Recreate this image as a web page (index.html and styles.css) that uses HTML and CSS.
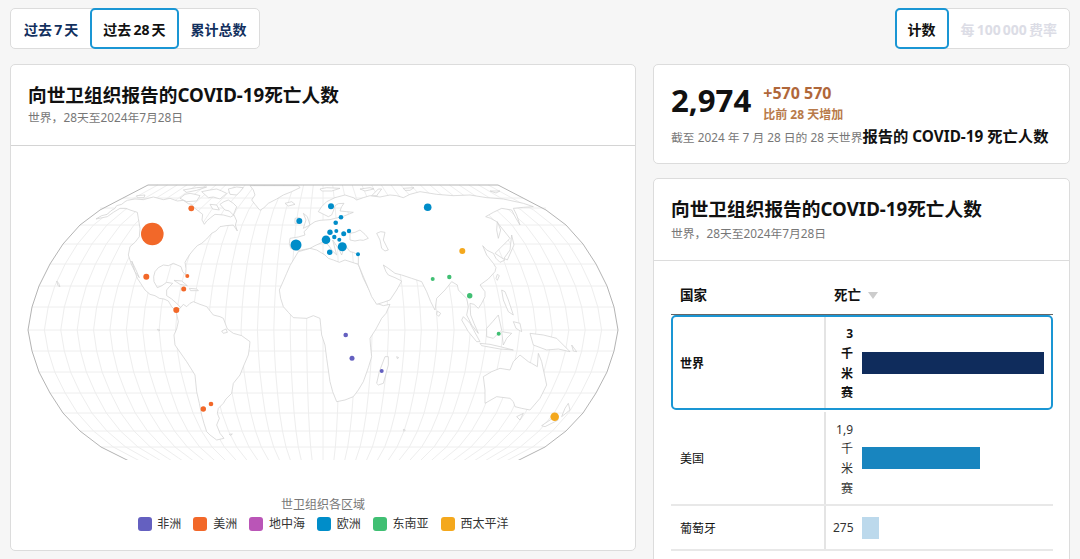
FILE: index.html
```html
<!DOCTYPE html>
<html lang="en">
<head>
    <meta charset="UTF-8">
    <meta name="viewport" content="width=device-width, initial-scale=1.0">
    <title>COVID-19 Deaths</title>
    <link rel="stylesheet" href="styles.css">
</head>
<body>

    <!-- Top toggles -->
    <div class="toolbar">
        <div class="toggle">
            <div class="toggle-item">过去 7 天</div>
            <div class="toggle-item active">过去 28 天</div>
            <div class="toggle-item">累计总数</div>
        </div>
        <div class="toggle">
            <div class="toggle-item active">计数</div>
            <div class="toggle-item disabled">每 100 000 费率</div>
        </div>
    </div>

    <div class="columns">
        <!-- Map card -->
        <div class="card map-card">
            <div class="card-head">
                <div class="card-title">向世卫组织报告的COVID-19死亡人数</div>
                <div class="card-sub">世界，28天至2024年7月28日</div>
            </div>

            <svg class="map" viewBox="11 146 624 314" aria-label="World map">
                <defs>
                    <path id="meridian" d="M175 185L200 198L223 210L243 225L260 244L273 264L284 286L291 307L295 330L291 351L284 372L273 393L260 413L243 431L222 447L200 458L190 463"/>
                </defs>

                <!-- parallels -->
                <g class="grid">
                    <path d="M123 198H523M100 208H546M80 225H566M63 244H583M50 264H596M39 286H607M32 307H614M28 330H618M32 351H614M39 372H607M50 393H596M63 413H583M80 431H566M101 447H545"/>
                </g>

                <!-- meridians, the same curve scaled around the centre line -->
                <g class="grid" transform="translate(323 0)">
                    <path d="M0 185V460"/>
                    <use href="#meridian" transform="scale(.0556 1)"/><use href="#meridian" transform="scale(-.0556 1)"/>
                    <use href="#meridian" transform="scale(.1111 1)"/><use href="#meridian" transform="scale(-.1111 1)"/>
                    <use href="#meridian" transform="scale(.1667 1)"/><use href="#meridian" transform="scale(-.1667 1)"/>
                    <use href="#meridian" transform="scale(.2222 1)"/><use href="#meridian" transform="scale(-.2222 1)"/>
                    <use href="#meridian" transform="scale(.2778 1)"/><use href="#meridian" transform="scale(-.2778 1)"/>
                    <use href="#meridian" transform="scale(.3333 1)"/><use href="#meridian" transform="scale(-.3333 1)"/>
                    <use href="#meridian" transform="scale(.3889 1)"/><use href="#meridian" transform="scale(-.3889 1)"/>
                    <use href="#meridian" transform="scale(.4444 1)"/><use href="#meridian" transform="scale(-.4444 1)"/>
                    <use href="#meridian" transform="scale(.5 1)"/><use href="#meridian" transform="scale(-.5 1)"/>
                    <use href="#meridian" transform="scale(.5556 1)"/><use href="#meridian" transform="scale(-.5556 1)"/>
                    <use href="#meridian" transform="scale(.6111 1)"/><use href="#meridian" transform="scale(-.6111 1)"/>
                    <use href="#meridian" transform="scale(.6667 1)"/><use href="#meridian" transform="scale(-.6667 1)"/>
                    <use href="#meridian" transform="scale(.7222 1)"/><use href="#meridian" transform="scale(-.7222 1)"/>
                    <use href="#meridian" transform="scale(.7778 1)"/><use href="#meridian" transform="scale(-.7778 1)"/>
                    <use href="#meridian" transform="scale(.8333 1)"/><use href="#meridian" transform="scale(-.8333 1)"/>
                    <use href="#meridian" transform="scale(.8889 1)"/><use href="#meridian" transform="scale(-.8889 1)"/>
                    <use href="#meridian" transform="scale(.9444 1)"/><use href="#meridian" transform="scale(-.9444 1)"/>
                </g>

                <!-- land, traced at 3x -->
                <g class="land" transform="translate(20 175) scale(.33333)">
                    <!-- North and Central America -->
                    <path d="M228 132L245 122L262 118L272 108L285 100L290 92L305 88L315 80L322 76L345 72L370 74L400 66L430 74L450 70L472 78L490 76L505 86L515 88L525 100L535 108L548 118L546 135L553 148L560 138L572 128L585 118L610 120L632 126L642 120L650 138L646 150L652 168L640 150L618 152L600 155L588 168L575 175L560 192L545 205L532 212L520 225L508 240L495 262L498 280L497 300L488 290L483 275L460 265L445 272L430 270L415 278L405 290L401 305L402 320L412 338L426 332L440 322L458 325L448 335L440 345L440 362L455 372L470 385L482 398L468 408L455 395L445 378L432 372L418 370L405 362L390 358L375 345L362 325L352 310L345 290L335 270L325 240L330 215L345 202L358 185L360 160L355 130L352 112L330 105L318 100L300 100L280 112L262 125Z"/>
                    <!-- Baja -->
                    <path d="M335 258L348 285L358 308L345 290Z"/>
                    <!-- Arctic islands -->
                    <path d="M480 70L495 58L510 55L525 58L540 62L530 78L500 80Z"/>
                    <path d="M545 50L570 45L590 42L605 48L620 55L600 72L580 66L565 68Z"/>
                    <path d="M600 88L612 80L625 75L640 85L650 95L640 120L628 108L615 105Z"/>
                    <path d="M625 42L650 36L670 38L660 50L650 60L630 58Z"/>
                    <path d="M490 45L530 38L560 36L530 46L500 52Z"/>
                    <path d="M570 88L590 90L598 105L578 102Z"/>
                    <path d="M350 62L375 60L372 68L352 68Z"/>
                    <!-- Greenland -->
                    <path d="M690 32L700 45L705 60L695 75L705 88L720 106L732 98L745 85L770 72L790 60L815 50L840 38L835 32Z"/>
                    <path d="M795 85L815 80L825 88L805 93Z"/>
                    <!-- Caribbean -->
                    <path d="M462 316L485 318L502 332L480 328Z"/>
                    <path d="M508 340L530 342L535 347L512 347Z"/>
                    <!-- Specks -->
                    <path d="M110 318L116 325L120 335L114 332Z"/>
                    <path d="M412 463L420 465L416 468Z"/>
                    <path d="M628 778L637 777L632 781Z"/>
                    <path d="M1150 763L1156 765L1152 769Z"/>
                    <path d="M1130 545L1136 548L1132 551Z"/>
                    <!-- South America -->
                    <path d="M468 408L482 398L490 388L500 395L510 385L520 380L540 388L560 395L572 410L580 420L600 425L610 430L622 462L640 475L665 482L690 500L688 520L685 540L672 570L660 600L640 625L635 655L618 672L610 685L595 700L592 715L598 730L590 750L600 775L612 790L590 795L570 780L560 770L552 745L545 720L538 685L530 650L525 600L500 560L465 510L462 480L470 462L475 440Z"/>
                    <path d="M605 468L618 462L622 472L610 475Z"/>
                    <!-- Africa -->
                    <path d="M835 230L850 226L870 220L890 225L915 240L925 250L940 255L958 262L975 255L1015 268L1030 310L1045 340L1060 368L1070 385L1090 392L1110 388L1098 415L1085 430L1068 462L1050 490L1052 518L1055 545L1045 578L1030 620L1015 645L1000 665L975 675L950 680L938 650L930 620L925 585L920 550L915 510L905 480L900 430L880 422L860 430L820 428L805 412L790 395L782 370L778 345L790 318L800 295L810 272L820 255Z"/>
                    <path d="M1070 625L1078 590L1095 545L1105 545L1105 570L1090 625L1075 630Z"/>
                    <!-- Eurasia -->
                    <path d="M835 227L812 220L808 205L810 190L835 186L855 180L852 170L858 165L870 150L885 140L900 136L915 135L930 134L945 130L965 126L985 118L1000 112L980 110L960 108L965 95L972 85L955 86L945 92L940 108L935 120L925 125L915 120L895 110L905 95L920 80L945 68L975 60L1000 68L1010 75L1030 68L1050 62L1080 66L1110 60L1130 62L1150 68L1170 58L1200 50L1250 58L1300 62L1350 60L1400 68L1450 72L1510 85L1540 95L1510 97L1480 100L1490 120L1500 150L1488 130L1475 105L1445 100L1420 112L1397 125L1412 130L1430 140L1450 165L1470 190L1450 210L1425 235L1440 245L1455 255L1440 262L1428 250L1420 235L1400 225L1388 212L1400 240L1420 265L1428 278L1425 290L1405 312L1380 330L1395 350L1395 365L1385 385L1375 400L1362 388L1350 385L1352 420L1362 445L1375 475L1355 450L1340 420L1345 395L1340 370L1325 355L1315 345L1312 330L1295 320L1275 345L1250 370L1245 405L1232 380L1220 350L1205 320L1175 310L1145 300L1125 295L1105 280L1090 270L1098 290L1105 300L1125 308L1145 318L1130 345L1110 375L1090 382L1070 388L1055 365L1045 340L1028 300L1015 268L1015 240L1000 232L990 230L975 210L965 240L958 225L945 205L938 195L950 240L936 226L925 210L912 200L900 205L885 212L870 220Z"/>
                    <path class="sea" d="M990 175L1005 172L1020 165L1035 178L1045 190L1030 196L1020 195L1005 198L990 195Z"/>
                    <path class="sea" d="M1070 175L1082 170L1095 172L1090 195L1105 225L1095 228L1085 220L1080 195Z"/>
                    <!-- Arctic Eurasia -->
                    <path d="M900 42L920 38L960 40L935 48L905 48Z"/>
                    <path d="M1020 42L1050 38L1062 42L1035 48Z"/>
                    <path d="M1055 62L1075 42L1085 42L1070 62Z"/>
                    <path d="M1150 40L1182 38L1170 46L1155 46Z"/>
                    <path d="M1410 48L1440 48L1428 54Z"/>
                    <!-- British Isles, Japan and the islands of the east -->
                    <path d="M850 115L862 125L870 150L850 160L858 135Z"/>
                    <path d="M825 130L838 128L838 145L825 145Z"/>
                    <path d="M1475 180L1482 210L1462 255L1452 250L1470 225Z"/>
                    <path d="M1432 140L1442 165L1435 190L1430 165Z"/>
                    <path d="M1432 298L1438 302L1432 316L1428 310Z"/>
                    <path d="M1252 408L1262 415L1256 424L1250 418Z"/>
                    <path d="M1445 345L1455 350L1465 375L1480 420L1465 410L1450 375Z"/>
                    <path d="M1330 425L1350 445L1380 500L1370 500L1345 470L1325 435Z"/>
                    <path d="M1380 505L1410 508L1440 515L1480 525L1440 522L1385 512Z"/>
                    <path d="M1400 460L1418 440L1435 420L1445 465L1420 490L1400 485Z"/>
                    <path d="M1445 470L1475 475L1460 490L1450 510Z"/>
                    <path d="M1480 440L1500 445L1505 470L1488 460Z"/>
                    <path d="M1530 475L1570 480L1610 490L1630 510L1650 530L1615 522L1580 525L1540 510Z"/>
                    <path d="M1655 510L1670 530L1660 528Z"/>
                    <!-- Australia and New Zealand -->
                    <path d="M1390 605L1415 590L1440 580L1470 585L1480 560L1500 540L1525 560L1535 565L1552 575L1555 535L1565 560L1580 630L1560 670L1530 705L1505 700L1485 695L1480 680L1470 670L1430 665L1395 685L1395 645Z"/>
                    <path d="M1490 725L1510 715L1500 735Z"/>
                    <path d="M1565 752L1605 725L1615 735L1575 755Z"/>
                    <path d="M1635 700L1645 685L1650 705L1625 725Z"/>
                </g>

                <!-- outline of the globe -->
                <g class="outline" transform="translate(323 0)">
                    <path d="M-175 185H175"/>
                    <use href="#meridian"/>
                    <use href="#meridian" transform="scale(-1 1)"/>
                </g>

                <!-- bubbles -->
                <g class="amro">
                    <circle cx="152.3" cy="234" r="11.3"/><circle cx="191.3" cy="208.3" r="2.9"/>
                    <circle cx="146.3" cy="276.7" r="3"/><circle cx="187.3" cy="276" r="2"/>
                    <circle cx="183.7" cy="289" r="2.5"/><circle cx="176.3" cy="310" r="3"/>
                    <circle cx="211" cy="404" r="2.3"/><circle cx="203.3" cy="409" r="2.7"/>
                </g>
                <g class="euro">
                    <circle cx="296" cy="245" r="5.5"/><circle cx="299.3" cy="221" r="3"/>
                    <circle cx="331" cy="206.3" r="3"/><circle cx="341" cy="217.3" r="2.3"/>
                    <circle cx="335.7" cy="222.7" r="2.3"/><circle cx="330" cy="232.3" r="2.7"/>
                    <circle cx="336.3" cy="231" r="2"/><circle cx="349" cy="231" r="2.2"/>
                    <circle cx="343.7" cy="233.7" r="2.5"/><circle cx="334.3" cy="237" r="2.2"/>
                    <circle cx="339.3" cy="239.7" r="2"/><circle cx="326" cy="239.7" r="4.3"/>
                    <circle cx="342.3" cy="246.7" r="4.5"/><circle cx="329.7" cy="252.3" r="2.7"/>
                    <circle cx="358" cy="254.3" r="2"/><circle cx="427.7" cy="207.3" r="3.8"/>
                </g>
                <g class="wpro">
                    <circle cx="462.3" cy="251" r="3"/><circle cx="554.7" cy="416.7" r="4.3"/>
                </g>
                <g class="searo">
                    <circle cx="432.7" cy="279" r="2"/><circle cx="449.3" cy="277" r="2.2"/>
                    <circle cx="469.7" cy="295.7" r="2.7"/><circle cx="498.7" cy="333.7" r="2"/>
                </g>
                <g class="afro">
                    <circle cx="345.7" cy="335" r="2.3"/><circle cx="352" cy="358.3" r="2.5"/>
                    <circle cx="381.7" cy="371" r="2"/>
                </g>
            </svg>

            <!-- Legend -->
            <div class="legend">
                <div class="legend-title">世卫组织各区域</div>
                <div class="legend-items">
                    <div class="legend-item"><span class="swatch bg-afro"></span>非洲</div>
                    <div class="legend-item"><span class="swatch bg-amro"></span>美洲</div>
                    <div class="legend-item"><span class="swatch bg-emro"></span>地中海</div>
                    <div class="legend-item"><span class="swatch bg-euro"></span>欧洲</div>
                    <div class="legend-item"><span class="swatch bg-searo"></span>东南亚</div>
                    <div class="legend-item"><span class="swatch bg-wpro"></span>西太平洋</div>
                </div>
            </div>
        </div>

        <div class="side">
            <!-- Summary card -->
            <div class="card summary">
                <div class="summary-top">
                    <div class="big-number">2,974</div>
                    <div class="change">
                        <div class="change-value">+570 570</div>
                        <div class="change-label">比前 28 天增加</div>
                    </div>
                </div>
                <div class="summary-line">截至 2024 年 7 月 28 日的 28 天世界<b>报告的 COVID-19 死亡人数</b></div>
            </div>

            <!-- Table card -->
            <div class="card table-card">
                <div class="card-head">
                    <div class="card-title">向世卫组织报告的COVID-19死亡人数</div>
                    <div class="card-sub">世界，28天至2024年7月28日</div>
                </div>

                <div class="table">
                    <div class="table-header">
                        <div>国家</div>
                        <div class="sort">死亡<span class="sort-arrow"></span></div>
                    </div>
                    <div class="row row-world">
                        <div class="cell-name">世界</div>
                        <div class="cell-value">
                            <div class="value">3 千米赛</div>
                            <div class="bar bar-world"></div>
                        </div>
                    </div>
                    <div class="row row-us">
                        <div class="cell-name">美国</div>
                        <div class="cell-value">
                            <div class="value">1,9 千米赛</div>
                            <div class="bar bar-us"></div>
                        </div>
                    </div>
                    <div class="row row-pt">
                        <div class="cell-name">葡萄牙</div>
                        <div class="cell-value">
                            <div class="value">275</div>
                            <div class="bar bar-pt"></div>
                        </div>
                    </div>
                </div>
            </div>
        </div>
    </div>

</body>
</html>
```

FILE: styles.css
```css
/* Global styling */
* {
    box-sizing: border-box;
}

html, body {
    height: 559px;
    overflow: hidden;
}

body {
    margin: 0;
    padding: 8px 10px 0;
    background: #f6f6f6;
    color: #111;
    font-family: "Noto Sans", "Noto Sans CJK SC", sans-serif;
    font-size: 12px;
}

/* Toggles */
.toolbar {
    display: flex;
    justify-content: space-between;
    margin-bottom: 15px;
}

.toggle {
    display: flex;
    height: 41px;
    background: #fff;
    border: 1px solid #dcdcdc;
    border-radius: 5px;
}

.toggle-item {
    display: flex;
    align-items: center;
    padding: 0 13px;
    color: #12305e;
    font-size: 14px;
    font-weight: 700;
    word-spacing: -1.5px;
}

.toggle-item:last-child {
    padding-right: 12px;
}

.toggle-item.active {
    margin: -1px;
    padding: 0 11px;
    color: #111;
    border: 2px solid #1a96d4;
    border-radius: 5px;
    background: #fff;
}

.toggle-item.disabled {
    color: #dcdde6;
}

/* Columns */
.columns {
    display: grid;
    grid-template-columns: 626px 417px;
    gap: 17px;
}

.side {
    display: flex;
    flex-direction: column;
    gap: 14px;
}

.card {
    background: #fff;
    border: 1px solid #dcdcdc;
    border-radius: 5px;
}

.card-head {
    padding: 16px 17px 0;
}

.card-title {
    color: #111;
    font-size: 18.7px;
    font-weight: 700;
    line-height: 28px;
}

.card-sub {
    color: #777;
    font-size: 11.8px;
    line-height: 17px;
}

/* Map */
.map-card {
    height: 487px;
}

.map-card .card-head {
    height: 81px;
    border-bottom: 1px solid #d4d4d4;
}

.map {
    display: block;
    width: 624px;
    height: 314px;
}

.grid {
    fill: none;
    stroke: #eeeeee;
    stroke-width: 1;
}

.land path {
    fill: #fff;
    stroke: #cfcfcf;
    stroke-width: 0.7;
    stroke-linejoin: round;
    vector-effect: non-scaling-stroke;
}

.outline {
    fill: none;
    stroke: #b4b4b4;
    stroke-width: 1;
}

.amro { fill: #f26829; }
.euro { fill: #008dc9; }
.wpro { fill: #f4a81d; }
.searo { fill: #40bf73; }
.afro { fill: #6460c0; }

#meridian, .grid path, .outline path {
    vector-effect: non-scaling-stroke;
}

/* Legend */
.legend {
    margin-top: 36px;
    text-align: center;
}

.legend-title {
    color: #777;
    line-height: 18px;
}

.legend-items {
    display: flex;
    justify-content: center;
    gap: 12px;
    margin-top: 1px;
    color: #333;
}

.legend-item {
    display: flex;
    align-items: center;
    gap: 5.8px;
    line-height: 18px;
}

.swatch {
    width: 14px;
    height: 14px;
    border-radius: 3px;
}

.bg-afro { background: #6460c0; }
.bg-amro { background: #f26829; }
.bg-emro { background: #ba55b7; }
.bg-euro { background: #008dc9; }
.bg-searo { background: #40bf73; }
.bg-wpro { background: #f4a81d; }

/* Summary */
.summary {
    height: 100px;
    padding: 13px 17px 0;
}

.summary-top {
    display: flex;
    gap: 12px;
}

.big-number {
    font-size: 31.2px;
    font-weight: 700;
    line-height: 44px;
}

.change {
    padding-top: 4px;
}

.change-value {
    color: #b0673a;
    font-size: 16px;
    font-weight: 700;
    line-height: 22px;
}

.change-label {
    margin-top: 2px;
    color: #b87a4a;
    font-size: 12px;
    font-weight: 700;
    line-height: 18px;
}

.summary-line {
    margin-top: 2px;
    color: #777;
    font-size: 11.8px;
    line-height: 20px;
    white-space: nowrap;
}

.summary-line b {
    color: #111;
    font-size: 15.3px;
}

/* Table */
.table-card {
    height: 400px;
}

.table-card .card-head {
    height: 82px;
    border-bottom: 1px solid #dcdcdc;
}

.table-card .card-sub {
    margin-top: 2px;
}

.table {
    margin: 0 16px 0 17px;
}

.table-header {
    display: grid;
    grid-template-columns: 154px 1fr;
    height: 54px;
    padding: 12px 0 0 9px;
    align-items: center;
    border-bottom: 1px solid #666;
    font-size: 13.5px;
    font-weight: 700;
}

.sort {
    display: flex;
    align-items: center;
}

.sort-arrow {
    width: 0;
    height: 0;
    margin: 3px 0 0 7px;
    border-left: 5px solid transparent;
    border-right: 5px solid transparent;
    border-top: 7px solid #ccc;
}

.row {
    display: grid;
    grid-template-columns: 153px 1fr;
    border-bottom: 2px solid #e8e8e8;
}

.cell-name {
    display: flex;
    align-items: center;
    padding-left: 9px;
}

.cell-value {
    display: flex;
    align-items: center;
    gap: 9px;
    padding-left: 7px;
    border-left: 2px solid #e4e4e4;
}

.value {
    flex: 0 0 20px;
    width: 20px;
    margin-top: 2px;
    line-height: 19.7px;
    text-align: right;
    color: #333;
}

.row-world {
    height: 95px;
    grid-template-columns: 151px 1fr;
    border: 2px solid #1a96d4;
    border-radius: 5px;
    font-weight: 700;
    color: #111;
}

.row-world .cell-name {
    padding-left: 7px;
}

.row-world .value {
    color: #111;
}

.row-us {
    height: 96px;
    padding-top: 2px;
}

.row-pt {
    height: 45px;
}

.row-pt .value {
    margin-top: 0;
}

.bar {
    height: 22px;
}

.bar-world {
    width: 182px;
    background: #0f2c5c;
}

.bar-us {
    width: 118px;
    background: #1885bf;
}

.bar-pt {
    width: 17px;
    background: #bcd9ec;
}
```
